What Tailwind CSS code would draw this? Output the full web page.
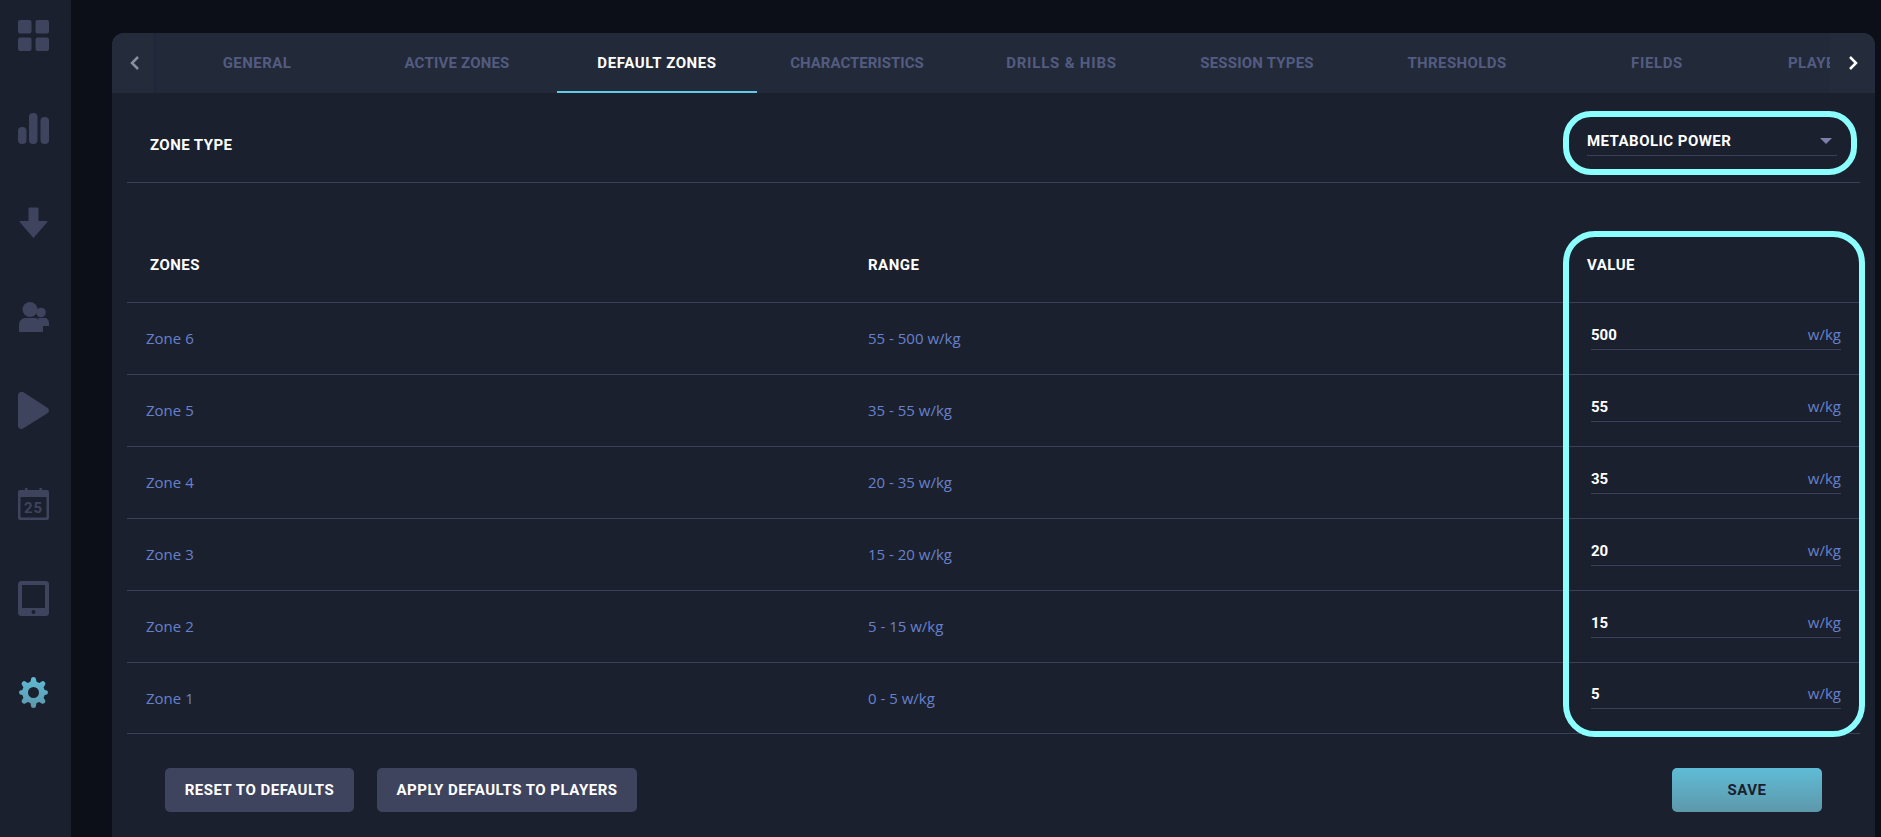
<!DOCTYPE html>
<html lang="en">
<head>
  <meta charset="UTF-8" />
  <title>Default Zones</title>
  <script src="https://cdn.jsdelivr.net/npm/@tailwindcss/browser@4"></script>
</head>
<body class="h-[837px] w-[1881px] overflow-hidden bg-[#0c0f17] font-['Open_Sans',sans-serif]">
  <div class="flex h-full">

    <!-- Sidebar -->
    <nav class="w-[71px] h-full bg-[#1a202e] shrink-0 flex flex-col items-start pl-[18px] text-[#3f445e]">
      <svg class="w-[31px] h-[31px] mt-[20px]" viewBox="0 0 31 31" fill="currentColor">
        <rect width="13.5" height="13.5" rx="2" /><rect x="17.5" width="13.5" height="13.5" rx="2" />
        <rect y="17.5" width="13.5" height="13.5" rx="2" /><rect x="17.5" y="17.5" width="13.5" height="13.5" rx="2" />
      </svg>
      <svg class="w-[31px] h-[31px] mt-[62px]" viewBox="0 0 31 31" fill="currentColor">
        <rect y="14" width="8.5" height="17" rx="4" /><rect x="11" width="8.5" height="31" rx="4" /><rect x="22.5" y="4" width="8.5" height="27" rx="4" />
      </svg>
      <svg class="w-[31px] h-[31px] mt-[63px]" viewBox="0 0 31 31" fill="currentColor">
        <path d="M10.5 1.5a1 1 0 0 1 1-1h8a1 1 0 0 1 1 1V14h8.5a.6.6 0 0 1 .4 1L15.5 31 1.6 15a.6.6 0 0 1 .4-1h8.5z" />
      </svg>
      <svg class="w-[31px] h-[30px] mt-[64px]" viewBox="0 0 31 30" fill="currentColor">
        <circle cx="12" cy="7.5" r="7.5" /><circle cx="23" cy="10.5" r="4.8" />
        <path d="M1 30v-7c0-4 3-7 6-7h10c3 0 6 3 6 7v7z" /><path d="M20 16h7c2.5 0 4 2.5 4 6v2h-6v6h-2c0-6-1-11-3-14z" />
      </svg>
      <svg class="w-[31px] h-[37px] mt-[60px]" viewBox="0 0 31 37" fill="currentColor">
        <path d="M0 3.5C0 .8 2.6-.8 5 0L29 15.5c2.600 1.500 2.600 4.500 0 6L5 36.500C2.600 37.800 0 36.200 0 33.500z" />
      </svg>
      <svg class="w-[31px] h-[32px] mt-[59px]" viewBox="0 0 31 32" fill="none">
        <path fill="currentColor" d="M2 2h5V.8a1.300 1.300 0 0 1 2.600 0V2h11.800V.8a1.300 1.300 0 0 1 2.600 0V2h5a2 2 0 0 1 2 2v26a2 2 0 0 1-2 2H2a2 2 0 0 1-2-2V4a2 2 0 0 1 2-2z" />
        <rect x="2.500" y="9" width="26" height="20.500" rx="1" fill="#1a202e" />
        <text x="15.500" y="25" text-anchor="middle" font-size="15" font-weight="700" fill="currentColor" font-family="Roboto, sans-serif" letter-spacing="1">25</text>
      </svg>
      <svg class="w-[31px] h-[35px] mt-[61px]" viewBox="0 0 31 35" fill="none">
        <rect width="31" height="35" rx="3.500" fill="currentColor" />
        <rect x="4" y="4" width="23" height="23" fill="#1a202e" />
        <circle cx="15.500" cy="31" r="2" fill="#1a202e" />
      </svg>
      <svg class="w-[31px] h-[31px] mt-[61px]" viewBox="0 0 31 31">
        <defs>
          <linearGradient id="gearFill" x1="0" y1="0" x2="0" y2="1">
            <stop offset="0" stop-color="#5fbcd6" /><stop offset="1" stop-color="#5d98ab" />
          </linearGradient>
        </defs>
        <path fill="url(#gearFill)" fill-rule="evenodd" d="M13 2.500a2.500 2.500 0 0 1 5 0l.6 2.300 2.700 1.100 2-1.200a2.500 2.500 0 0 1 3.500 3.500l-1.200 2 1.100 2.700 2.300.6a2.500 2.500 0 0 1 0 3.900l-2.300.6-1.100 2.700 1.200 2a2.500 2.500 0 0 1-3.500 3.500l-2-1.200-2.700 1.100-.6 2.300a2.500 2.500 0 0 1-5 0l-.6-2.300-2.700-1.100-2 1.200a2.500 2.500 0 0 1-3.500-3.500l1.200-2-1.100-2.700-2.300-.6a2.500 2.500 0 0 1 0-3.900l2.300-.6 1.100-2.700-1.200-2a2.500 2.500 0 0 1 3.500-3.500l2 1.200 2.700-1.100zM15.500 10a5.500 5.500 0 1 0 0 11 5.500 5.500 0 0 0 0-11z" />
      </svg>
    </nav>

    <!-- Panel -->
    <main class="relative ml-[41px] mt-[33px] w-[1763px] bg-[#1a202e] rounded-t-[12px]">

      <!-- Tabs -->
      <div class="flex h-[60px] bg-[#222938] rounded-t-[12px] overflow-hidden font-['Roboto',sans-serif] font-bold text-[15px] tracking-[0.2px] text-[#535c80]">
        <button class="w-[45px] shrink-0 bg-[#242b3a] border-r-[4px] border-[#20273a] pl-[4px] flex items-center justify-center">
          <svg class="w-[10px] h-[14px]" viewBox="0 0 10 14" fill="none" stroke="#8a8f9c" stroke-width="2.500"><path d="M8 1 2 7l6 6" /></svg>
        </button>
        <div class="flex-1 flex overflow-hidden">
          <div class="w-[200px] shrink-0 flex items-center justify-center tracking-[0.45px]">GENERAL</div>
          <div class="w-[200px] shrink-0 flex items-center justify-center">ACTIVE ZONES</div>
          <div class="w-[200px] shrink-0 flex items-center justify-center tracking-[0.6px] text-white border-b-2 border-[#5fcbe8] pt-[2px]">DEFAULT ZONES</div>
          <div class="w-[200px] shrink-0 flex items-center justify-center tracking-[0px]">CHARACTERISTICS</div>
          <div class="w-[200px] shrink-0 flex items-center justify-center tracking-[0.8px] pl-[9px]">DRILLS &amp; HIBS</div>
          <div class="w-[200px] shrink-0 flex items-center justify-center">SESSION TYPES</div>
          <div class="w-[200px] shrink-0 flex items-center justify-center tracking-[0.4px]">THRESHOLDS</div>
          <div class="w-[200px] shrink-0 flex items-center justify-center tracking-[0.6px]">FIELDS</div>
          <div class="w-[200px] shrink-0 flex items-center justify-start pl-[31px] tracking-[0.4px]">PLAYERS</div>
        </div>
        <button class="w-[45px] shrink-0 bg-[#242b3a] flex items-center justify-center">
          <svg class="w-[10px] h-[14px]" viewBox="0 0 10 14" fill="none" stroke="#ffffff" stroke-width="2.500"><path d="m2 1 6 6-6 6" /></svg>
        </button>
      </div>

      <!-- Zone type -->
      <div class="mx-[15px] h-[90px] border-b border-[#3b405a] flex items-center justify-between font-['Roboto',sans-serif] font-bold text-[15px] tracking-[0.45px] text-white">
        <span class="ml-[23px] mt-[16px]">ZONE TYPE</span>
        <div class="w-[250px] mr-[23px] h-[36px] pt-[8px] border-b border-[#3b405a] flex items-center justify-between">
          <span>METABOLIC POWER</span>
          <svg class="w-[12px] h-[6px] mr-[5px]" viewBox="0 0 12 6" fill="#7d80ad"><path d="M0 0h12L6 6z" /></svg>
        </div>
      </div>

      <!-- Zones table -->
      <div class="mx-[15px] mt-[48px]">
        <div class="grid grid-cols-[738px_700px_1fr] h-[72px] pb-[2px] items-center border-b border-[#3b405a] font-['Roboto',sans-serif] font-bold text-[15px] tracking-[0.5px] text-white">
          <span class="pl-[23px]">ZONES</span>
          <span class="pl-[3px]">RANGE</span>
          <span class="pl-[22px]">VALUE</span>
        </div>

        <div class="grid grid-cols-[738px_700px_1fr] h-[72px] items-center border-b border-[#3b405a] text-[15px] text-[#6880cc]">
          <span class="pl-[19px]">Zone 6</span>
          <span class="pl-[3px]">55 - 500 w/kg</span>
          <div class="ml-[26px] w-[250px] h-[30px] mt-[-8px] border-b border-[#3b405a] flex items-center justify-between">
            <span class="mt-[2px] font-['Roboto',sans-serif] font-bold text-white">500</span><span>w/kg</span>
          </div>
        </div>
        <div class="grid grid-cols-[738px_700px_1fr] h-[72px] items-center border-b border-[#3b405a] text-[15px] text-[#6880cc]">
          <span class="pl-[19px]">Zone 5</span>
          <span class="pl-[3px]">35 - 55 w/kg</span>
          <div class="ml-[26px] w-[250px] h-[30px] mt-[-8px] border-b border-[#3b405a] flex items-center justify-between">
            <span class="mt-[2px] font-['Roboto',sans-serif] font-bold text-white">55</span><span>w/kg</span>
          </div>
        </div>
        <div class="grid grid-cols-[738px_700px_1fr] h-[72px] items-center border-b border-[#3b405a] text-[15px] text-[#6880cc]">
          <span class="pl-[19px]">Zone 4</span>
          <span class="pl-[3px]">20 - 35 w/kg</span>
          <div class="ml-[26px] w-[250px] h-[30px] mt-[-8px] border-b border-[#3b405a] flex items-center justify-between">
            <span class="mt-[2px] font-['Roboto',sans-serif] font-bold text-white">35</span><span>w/kg</span>
          </div>
        </div>
        <div class="grid grid-cols-[738px_700px_1fr] h-[72px] items-center border-b border-[#3b405a] text-[15px] text-[#6880cc]">
          <span class="pl-[19px]">Zone 3</span>
          <span class="pl-[3px]">15 - 20 w/kg</span>
          <div class="ml-[26px] w-[250px] h-[30px] mt-[-8px] border-b border-[#3b405a] flex items-center justify-between">
            <span class="mt-[2px] font-['Roboto',sans-serif] font-bold text-white">20</span><span>w/kg</span>
          </div>
        </div>
        <div class="grid grid-cols-[738px_700px_1fr] h-[72px] items-center border-b border-[#3b405a] text-[15px] text-[#6880cc]">
          <span class="pl-[19px]">Zone 2</span>
          <span class="pl-[3px]">5 - 15 w/kg</span>
          <div class="ml-[26px] w-[250px] h-[30px] mt-[-8px] border-b border-[#3b405a] flex items-center justify-between">
            <span class="mt-[2px] font-['Roboto',sans-serif] font-bold text-white">15</span><span>w/kg</span>
          </div>
        </div>
        <div class="grid grid-cols-[738px_700px_1fr] h-[71px] items-center border-b border-[#3b405a] text-[15px] text-[#6880cc]">
          <span class="pl-[19px]">Zone 1</span>
          <span class="pl-[3px]">0 - 5 w/kg</span>
          <div class="ml-[26px] w-[250px] h-[30px] mt-[-8px] border-b border-[#3b405a] flex items-center justify-between">
            <span class="mt-[2px] font-['Roboto',sans-serif] font-bold text-white">5</span><span>w/kg</span>
          </div>
        </div>
      </div>

      <!-- Actions -->
      <div class="flex mt-[34px] pl-[53px] pr-[53px] font-['Roboto',sans-serif] font-bold text-[15px] tracking-[0.5px]">
        <button class="w-[189px] h-[44px] rounded-[5px] bg-[#3f445e] text-white">RESET TO DEFAULTS</button>
        <button class="w-[260px] h-[44px] rounded-[5px] bg-[#3f445e] text-white ml-[23px]">APPLY DEFAULTS TO PLAYERS</button>
        <button class="w-[150px] h-[44px] rounded-[5px] bg-linear-to-b from-[#5fbcd6] to-[#5d98ab] text-[#1a202e] ml-auto">SAVE</button>
      </div>

      <!-- Highlight outlines over the select and the value column -->
      <div class="absolute left-[1451px] top-[78px] w-[294px] h-[64px] border-[6px] border-[#8bfffd] rounded-[28px]"></div>
      <div class="absolute left-[1451px] top-[198px] w-[302px] h-[506px] border-[6px] border-[#8bfffd] rounded-[32px]"></div>
    </main>
  </div>
</body>
</html>
